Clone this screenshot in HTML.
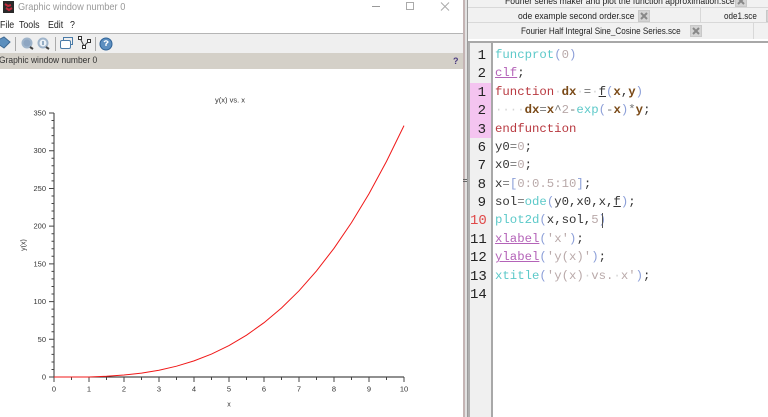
<!DOCTYPE html>
<html><head><meta charset="utf-8">
<style>
html,body{margin:0;padding:0;width:768px;height:417px;overflow:hidden;background:#fff}
body{font-family:"Liberation Sans",sans-serif}
#w{position:absolute;left:0;top:0;width:768px;height:417px;overflow:hidden;background:#fff;filter:blur(.35px)}
.a{position:absolute;white-space:nowrap}
.ui{font-family:"Liberation Sans",sans-serif;font-size:9.300px;color:#222;line-height:14px;transform-origin:0 0}
.m{font:9.800px/14px "Liberation Sans",sans-serif;color:#222;top:19px;transform:scaleX(.9);transform-origin:0 0}
.x{position:absolute;width:10px;height:10px;background:#d4d4d4;border:1px solid #c8c8c8}
.x svg{position:absolute;left:0;top:0}
.n{position:absolute;left:470px;width:16px;text-align:right;font:14px/18px "Liberation Mono",monospace;color:#222}
.l{position:absolute;left:495px;font:12.33px/18px "Liberation Mono",monospace;color:#333;white-space:pre}
.c{color:#5cc9c9}.r{color:#b8383f}.p{color:#b463b8;text-decoration:underline}.g{color:#b9a9a9}.b{color:#8c9fd8}
.k{color:#7a4a18;font-weight:bold}.d{color:#d5d5d5}.u{text-decoration:underline}.o{color:#777}
</style></head><body><div id="w">
<!-- left window -->
<svg class="a" style="left:3px;top:1px" width="11" height="12" viewBox="0 0 11 12"><rect width="11" height="12" fill="#2a2a2a"/><path d="M2 3l3 2 3-1M3 7l3 2 3-2" stroke="#c0283a" stroke-width="2" fill="none"/></svg>
<div class="a" style="left:18px;top:0;font:10.5px/14px 'Liberation Sans',sans-serif;color:#9a9a9a;transform:scaleX(.88);transform-origin:0 0">Graphic window number 0</div>
<svg class="a" style="left:370px;top:0" width="90" height="13"><path d="M2 6.500h8" stroke="#999"/><rect x="36.500" y="2.500" width="7" height="7" fill="none" stroke="#aaa"/><path d="M71 2.500l8 8M79 2.500l-8 8" stroke="#aaa"/></svg>
<div class="a m" style="left:0">File</div><div class="a m" style="left:19px">Tools</div><div class="a m" style="left:48px">Edit</div><div class="a m" style="left:70px">?</div>
<div class="a" style="left:0;top:33px;width:463px;height:1px;background:#b5b5b5"></div>
<div class="a" style="left:0;top:34px;width:463px;height:19px;background:#efefef"></div>
<div class="a" style="left:0;top:53px;width:463px;height:16px;background:#d4d0c8"></div>
<svg class="a" style="left:0;top:34px" width="125" height="19">
<path d="M-2 6l6-3 6 5-6 6-6-4z" fill="#5b8ebd" stroke="#3f6a94"/>
<path d="M15.500 3v14M55.500 3v14M95.500 3v14" stroke="#aaa"/>
<circle cx="27" cy="9" r="4.500" fill="#8ea6c2" stroke="#9fb4ca" stroke-width="2"/><path d="M30 13l3 2" stroke="#444" stroke-width="2"/>
<circle cx="43" cy="9" r="4.500" fill="#eaf0f6" stroke="#9fb4ca" stroke-width="2"/><path d="M46 13l3 2" stroke="#444" stroke-width="2"/><path d="M43 7v4" stroke="#3f6a94"/>
<rect x="60.500" y="6.500" width="10" height="8" rx="1.500" fill="#fff" stroke="#4a7ba8"/><path d="M63.500 6v-2.500h9v7h-2" fill="none" stroke="#4a7ba8"/>
<path d="M80 4l4 8 5-5" fill="none" stroke="#444"/><rect x="78.500" y="2.500" width="3" height="3" fill="#fff" stroke="#333"/><rect x="82.500" y="11.500" width="3" height="3" fill="#fff" stroke="#333"/><rect x="87.500" y="5.500" width="3" height="3" fill="#fff" stroke="#333"/>
<circle cx="106" cy="10" r="6" fill="#5d8fc0" stroke="#2e6296"/><path d="M104 8q2-2.500 4 0l-2 2v2" fill="none" stroke="#fff" stroke-width="1.300"/>
</svg>
<div class="a" style="left:-1px;top:54px;font:9.500px/14px 'Liberation Sans',sans-serif;color:#333;transform:scaleX(.89);transform-origin:0 0">Graphic window number 0</div>
<div class="a" style="left:453px;top:55px;font:bold 9px/12px 'Liberation Sans',sans-serif;color:#4a3a80">?</div>

<!-- plot -->
<svg class="a" style="left:0;top:0" width="463" height="417" font-family="Liberation Sans,sans-serif" font-size="7.500" fill="#333">
<path d="M54 113V377" fill="none" stroke="#555" stroke-width="1.200"/>
<path d="M54 377H404" fill="none" stroke="#222" stroke-width="1"/>
<path d="M49 113h5M49 150.700h5M49 188.500h5M49 226.100h5M49 263.900h5M49 301.600h5M49 339.300h5M49 377h5M51.500 120.500h2.500M51.500 128h2.500M51.500 135.600h2.500M51.500 143.100h2.500M51.500 158.300h2.500M51.500 165.800h2.500M51.500 173.400h2.500M51.500 180.900h2.500M51.500 196h2.500M51.500 203.500h2.500M51.500 211h2.500M51.500 218.600h2.500M51.500 233.700h2.500M51.500 241.200h2.500M51.500 248.800h2.500M51.500 256.300h2.500M51.500 271.400h2.500M51.500 278.900h2.500M51.500 286.500h2.500M51.500 294h2.500M51.500 309.100h2.500M51.500 316.700h2.500M51.500 324.200h2.500M51.500 331.800h2.500M51.500 346.900h2.500M51.500 354.400h2.500M51.500 362h2.500M51.500 369.500h2.500" stroke="#444" fill="none"/>
<path d="M54 377v5M89 377v5M124 377v5M159 377v5M194 377v5M229 377v5M264 377v5M299 377v5M334 377v5M369 377v5M404 377v5M71.500 377v3M106.500 377v3M141.500 377v3M176.500 377v3M211.500 377v3M246.500 377v3M281.500 377v3M316.500 377v3M351.500 377v3M386.500 377v3" stroke="#444" fill="none"/>
<g text-anchor="end"><text x="46" y="115.500">350</text><text x="46" y="153.200">300</text><text x="46" y="191">250</text><text x="46" y="228.600">200</text><text x="46" y="266.400">150</text><text x="46" y="304.100">100</text><text x="46" y="341.800">50</text><text x="46" y="379.500">0</text></g>
<g text-anchor="middle"><text x="54" y="391.500">0</text><text x="89" y="391.500">1</text><text x="124" y="391.500">2</text><text x="159" y="391.500">3</text><text x="194" y="391.500">4</text><text x="229" y="391.500">5</text><text x="264" y="391.500">6</text><text x="299" y="391.500">7</text><text x="334" y="391.500">8</text><text x="369" y="391.500">9</text><text x="404" y="391.500">10</text>
<text x="229" y="406.500" font-size="7">x</text><text x="230" y="102.500" font-size="7.500">y(x) vs. x</text>
<text transform="translate(25.500 245) rotate(-90)" font-size="7">y(x)</text></g>
<path d="M54 377H89L106.500 376.200 124 375 141.500 373.100 159 370.200 176.500 366.200 194 360.900 211.500 354.100 229 345.600 246.500 335.200 264 322.700 281.500 308 299 290.800 316.500 270.900 334 248.300 351.500 222.600 369 193.700 386.500 161.400 404 125.600" fill="none" stroke="#f01818" stroke-width="1"/>
</svg>

<!-- splitter -->
<div class="a" style="left:463px;top:0;width:2px;height:417px;background:#c4b4b4"></div>
<div class="a" style="left:465px;top:0;width:2px;height:417px;background:#e2e2e2"></div>
<div class="a" style="left:463px;top:179px;width:4px;height:1px;background:#666"></div>
<div class="a" style="left:463px;top:181px;width:4px;height:1px;background:#666"></div>
<div class="a" style="left:467px;top:0;width:1px;height:417px;background:#9a9a9a"></div>

<!-- tabs -->
<div class="a" style="left:468px;top:0;width:300px;height:39px;background:#f1f1f1"></div>
<div class="a" style="left:468px;top:7px;width:300px;height:1px;background:#d8d8d8"></div>
<div class="a" style="left:468px;top:22px;width:300px;height:1px;background:#d8d8d8"></div>
<div class="a" style="left:700px;top:8px;width:1px;height:14px;background:#d8d8d8"></div>
<div class="a" style="left:753px;top:23px;width:1px;height:16px;background:#d8d8d8"></div>
<div class="a ui" style="left:505px;top:-6px;transform:scaleX(.92)">Fourier series maker and plot the function approximation.sce</div>
<div class="x" style="left:735px;top:-5px"><svg width="10" height="10"><path d="M2 2l6 6M8 2l-6 6" stroke="#888" stroke-width="2"/></svg></div>
<div class="a ui" style="left:518px;top:9px;transform:scaleX(.92)">ode example second order.sce</div>
<div class="x" style="left:638px;top:10px"><svg width="10" height="10"><path d="M2 2l6 6M8 2l-6 6" stroke="#888" stroke-width="2"/></svg></div>
<div class="a ui" style="left:724px;top:9px;transform:scaleX(.87)">ode1.sce</div>
<div class="x" style="left:766px;top:10px"><svg width="10" height="10"><path d="M2 2l6 6M8 2l-6 6" stroke="#888" stroke-width="2"/></svg></div>
<div class="a ui" style="left:521px;top:24px;transform:scaleX(.87)">Fourier Half Integral Sine_Cosine Series.sce</div>
<div class="x" style="left:690px;top:25px"><svg width="10" height="10"><path d="M2 2l6 6M8 2l-6 6" stroke="#888" stroke-width="2"/></svg></div>

<!-- editor -->
<div class="a" style="left:468px;top:39px;width:300px;height:2px;background:#fff"></div>
<div class="a" style="left:468px;top:41px;width:300px;height:2px;background:#a8a8a8"></div>
<div class="a" style="left:468px;top:43px;width:2px;height:374px;background:#b0b0b0"></div>
<div class="a" style="left:470px;top:43px;width:22px;height:374px;background:#f0f0f0"></div>
<div class="a" style="left:470px;top:83px;width:22px;height:55px;background:#f4c4f0"></div>
<div class="a" style="left:491px;top:43px;width:2px;height:374px;background:#a8a8a8"></div>

<div class="n" style="top:47px">1</div><div class="n" style="top:65.400px">2</div><div class="n" style="top:83.800px">1</div><div class="n" style="top:102.100px">2</div><div class="n" style="top:120.500px">3</div><div class="n" style="top:138.900px">6</div><div class="n" style="top:157.300px">7</div><div class="n" style="top:175.700px">8</div><div class="n" style="top:194px">9</div><div class="n" style="top:212.400px;color:#e04848">10</div><div class="n" style="top:230.800px">11</div><div class="n" style="top:249.200px">12</div><div class="n" style="top:267.500px">13</div><div class="n" style="top:285.900px">14</div>

<div class="l" style="top:46px"><span class="c">funcprot</span><span class="b">(</span><span class="g">0</span><span class="b">)</span></div>
<div class="l" style="top:64.400px"><span class="p">clf</span>;</div>
<div class="l" style="top:82.800px"><span class="r">function</span><span class="d">·</span><span class="k">dx</span><span class="d">·</span><span class="o">=</span><span class="d">·</span><span class="u">f</span><span class="b">(</span><span class="k">x</span>,<span class="k">y</span><span class="b">)</span></div>
<div class="l" style="top:101.100px"><span class="d">····</span><span class="k">dx</span><span class="o">=</span><span class="k">x</span><span class="o">^</span><span class="g">2</span><span class="o">-</span><span class="c">exp</span><span class="b">(</span><span class="o">-</span><span class="k">x</span><span class="b">)</span><span class="o">*</span><span class="k">y</span>;</div>
<div class="l" style="top:119.500px"><span class="r">endfunction</span></div>
<div class="l" style="top:137.900px">y0<span class="o">=</span><span class="g">0</span>;</div>
<div class="l" style="top:156.300px">x0<span class="o">=</span><span class="g">0</span>;</div>
<div class="l" style="top:174.700px">x<span class="o">=</span><span class="b">[</span><span class="g">0:0.5:10</span><span class="b">]</span>;</div>
<div class="l" style="top:193px">sol<span class="o">=</span><span class="c">ode</span><span class="b">(</span>y0,x0,x,<span class="u">f</span><span class="b">)</span>;</div>
<div class="l" style="top:211.400px"><span class="c">plot2d</span><span class="b">(</span>x,sol,<span class="g">5</span><span class="b">)</span></div>
<div class="a" style="left:602px;top:213px;width:1px;height:15px;background:#555"></div>
<div class="l" style="top:229.800px"><span class="p">xlabel</span><span class="b">(</span><span class="g">'x'</span><span class="b">)</span>;</div>
<div class="l" style="top:248.200px"><span class="p">ylabel</span><span class="b">(</span><span class="g">'y(x)'</span><span class="b">)</span>;</div>
<div class="l" style="top:266.500px"><span class="c">xtitle</span><span class="b">(</span><span class="g">'y(x)<span class="d">·</span>vs.<span class="d">·</span>x'</span><span class="b">)</span>;</div>
</div></body></html>
